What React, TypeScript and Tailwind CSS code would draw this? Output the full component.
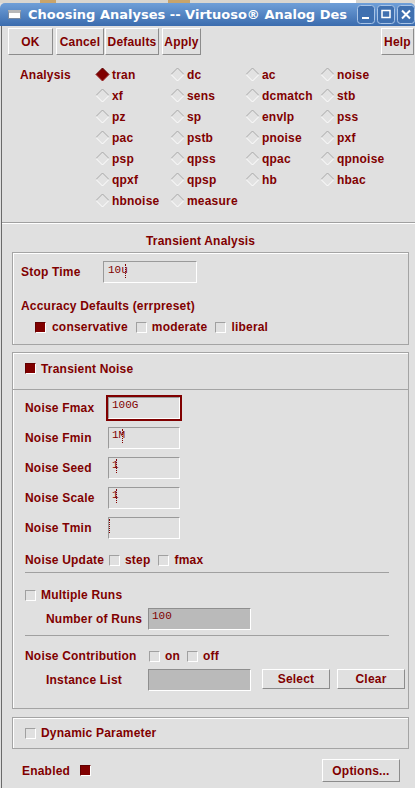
import React from "react";

const label = "text-[#800000] font-bold text-[12px] leading-[16px] tracking-[0.2px] whitespace-nowrap";
const mono = "font-['Liberation_Mono',monospace] text-[11px] leading-[13px] text-[#800000]";

const analyses = [
  "tran", "dc", "ac", "noise",
  "xf", "sens", "dcmatch", "stb",
  "pz", "sp", "envlp", "pss",
  "pac", "pstb", "pnoise", "pxf",
  "psp", "qpss", "qpac", "qpnoise",
  "qpxf", "qpsp", "hb", "hbac",
  "hbnoise", "measure",
];

function Diamond({ on }: { on?: boolean }) {
  return (
    <svg width="15" height="15" viewBox="0 0 15 15" className="shrink-0">
      <polygon points="7.5,1 14,7.5 7.5,14 1,7.5" fill={on ? "#800000" : "#e2e2e2"} />
      <polyline points="1,7.5 7.5,1 14,7.5" fill="none" stroke={on ? "#5c0000" : "#a8a8a8"} strokeWidth="1" />
      <polyline points="1,7.5 7.5,14 14,7.5" fill="none" stroke={on ? "#9a2020" : "#ffffff"} strokeWidth="1" />
    </svg>
  );
}

function Check({ on }: { on?: boolean }) {
  return (
    <span
      className={`block w-[11px] h-[11px] shrink-0 border border-b-white border-r-white ${
        on ? "bg-[#800000] border-t-[#600000] border-l-[#600000]" : "bg-[#e0e0e0] border-t-[#a0a0a0] border-l-[#a0a0a0]"
      }`}
    />
  );
}

function Cursor() {
  return <span className="inline-block align-top w-0 h-[14px] -ml-[3px] border-l border-dotted border-[#800000]" />;
}

function Field({ value, w, focus, cursor }: { value: string; w: number; focus?: boolean; cursor?: boolean }) {
  return (
    <div className={`border-2 ${focus ? "border-[#800000]" : "border-transparent"}`}>
      <div
        className={`h-[22px] border border-t-[#9a9a9a] border-l-[#9a9a9a] border-b-white border-r-white bg-[#e0e0e0] pl-[3px] pt-[1px] ${mono}`}
        style={{ width: w }}
      >
        {value}
        {cursor && <Cursor />}
      </div>
    </div>
  );
}

function Button({ children, className = "" }: { children: React.ReactNode; className?: string }) {
  return (
    <div
      className={`flex items-center justify-center bg-[#e0e0e0] border border-t-white border-l-white border-b-[#8c8c8c] border-r-[#8c8c8c] ${label} ${className}`}
    >
      {children}
    </div>
  );
}

function WinButton({ kind }: { kind: "min" | "max" | "close" }) {
  return (
    <svg width="18" height="19" viewBox="0 0 18 19" className="shrink-0 block">
      <rect x="0.5" y="0.5" width="17" height="18" rx="3" fill="#3f70b0" stroke="#a9c4e6" />
      {kind === "min" && <rect x="5" y="12" width="7" height="2" fill="#fff" />}
      {kind === "max" && <rect x="5" y="5.5" width="8" height="7" fill="none" stroke="#fff" strokeWidth="1.5" />}
      {kind === "close" && <path d="M5 5.5 L13 13.5 M13 5.5 L5 13.5" stroke="#fff" strokeWidth="2" />}
    </svg>
  );
}

export default function App() {
  return (
    <div className="w-[415px] h-[788px] overflow-hidden bg-[#e0e0e0] font-['Liberation_Sans',Arial,sans-serif] flex flex-col">
      {/* desktop strip above the window */}
      <div className="h-[3px] flex shrink-0 bg-[#d9d6d0]">
        <div className="w-[40px]" />
        <div className="w-[16px] bg-[#c9a46a]" />
        <div className="w-[112px]" />
        <div className="w-[22px] bg-[#c9a46a]" />
        <div className="w-[140px]" />
        <div className="w-[26px] bg-white" />
      </div>

      {/* title bar */}
      <div className="h-[23px] shrink-0 flex items-center rounded-t-[5px] bg-gradient-to-b from-[#6f9fd8] to-[#3b6cae] pl-[8px]">
        <div className="w-[13px] h-[9px] bg-white border border-[#7a8aa0] border-t-[3px] border-t-[#b8b8b8] shrink-0" />
        <div className="ml-[7px] flex-1 min-w-0 overflow-hidden whitespace-nowrap text-white font-bold text-[13px] leading-[16px] font-['DejaVu_Sans',sans-serif]">
          Choosing Analyses -- Virtuoso® Analog Des
        </div>
        <div className="w-[58px] shrink-0 flex gap-[2px]">
          <WinButton kind="min" />
          <WinButton kind="max" />
          <WinButton kind="close" />
        </div>
      </div>

      {/* body */}
      <div className="flex-1 flex flex-col ml-[1px] border-l border-[#6a6a6a]">
        {/* toolbar */}
        <div className="h-[32px] shrink-0 flex pt-[2px]">
          <Button className="ml-[6px] w-[45px] h-[27px]">OK</Button>
          <Button className="ml-[3px] w-[48px] h-[27px]">Cancel</Button>
          <Button className="ml-[1px] w-[54px] h-[27px]">Defaults</Button>
          <Button className="ml-[3px] w-[39px] h-[27px]">Apply</Button>
          <Button className="ml-auto mr-[1px] w-[33px] h-[27px]">Help</Button>
        </div>

        {/* analysis choices */}
        <div className="flex pl-[18px] pt-[6px]">
          <div className={`w-[75px] h-[21px] flex items-center ${label}`}>Analysis</div>
          <div className="grid grid-cols-[75px_75px_75px_75px] auto-rows-[21px]">
            {analyses.map((a, i) => (
              <div key={a} className="flex items-center gap-[2px]">
                <Diamond on={i === 0} />
                <span className={label}>{a}</span>
              </div>
            ))}
          </div>
        </div>

        <div className="mt-[11px] h-[2px] border-t border-[#a0a0a0] border-b border-b-white" />

        <div className={`h-[28px] pt-[6px] flex items-center pl-[144px] ${label}`}>Transient Analysis</div>

        {/* transient analysis box */}
        <div className="ml-[10px] mr-[6px] h-[93px] border border-[#a4a4a4] shadow-[inset_1px_1px_0_#ffffff] pl-[8px] pt-[8px]">
          <div className="flex items-center h-[22px]">
            <span className={`w-[82px] ${label}`}>Stop Time</span>
            <div
              className={`w-[94px] h-[22px] border border-t-[#9a9a9a] border-l-[#9a9a9a] border-b-white border-r-white pl-[4px] pt-[2px] ${mono}`}
            >
              10u
              <Cursor />
            </div>
          </div>
          <div className={`mt-[15px] ${label}`}>Accuracy Defaults (errpreset)</div>
          <div className="mt-[5px] h-[16px] flex items-center pl-[14px]">
            <Check on />
            <span className={`ml-[6px] ${label}`}>conservative</span>
            <span className="ml-[8px]" />
            <Check />
            <span className={`ml-[5px] ${label}`}>moderate</span>
            <span className="ml-[8px]" />
            <Check />
            <span className={`ml-[5px] ${label}`}>liberal</span>
          </div>
        </div>

        {/* transient noise box */}
        <div className="mt-[7px] ml-[10px] mr-[6px] h-[357px] border border-[#a4a4a4] shadow-[inset_1px_1px_0_#ffffff] flex flex-col">
          <div className="h-[37px] shrink-0 border-b border-[#a4a4a4] flex items-center pl-[12px] pb-[5px]">
            <Check on />
            <span className={`ml-[5px] ${label}`}>Transient Noise</span>
          </div>
          <div className="pt-[3px] pl-[12px] flex flex-col">
            {[
              ["Noise Fmax", "100G", true, false],
              ["Noise Fmin", "1M", false, true],
              ["Noise Seed", "1", false, true],
              ["Noise Scale", "1", false, true],
              ["Noise Tmin", "", false, true],
            ].map(([name, val, focus, cur]) => (
              <div key={name as string} className="h-[30px] flex items-center">
                <span className={`w-[81px] ${label}`}>{name as string}</span>
                <Field value={val as string} w={72} focus={focus as boolean} cursor={cur as boolean} />
              </div>
            ))}

            <div className="mt-[9px] h-[16px] flex items-center">
              <span className={`w-[84px] ${label}`}>Noise Update</span>
              <Check />
              <span className={`ml-[5px] ${label}`}>step</span>
              <span className="ml-[8px]" />
              <Check />
              <span className={`ml-[5px] ${label}`}>fmax</span>
            </div>

            <div className="mt-[4px] w-[364px] border-t border-[#a0a0a0]" />

            <div className="mt-[14px] h-[16px] flex items-center">
              <Check />
              <span className={`ml-[5px] ${label}`}>Multiple Runs</span>
            </div>
            <div className="mt-[5px] h-[22px] flex items-center pl-[21px]">
              <span className={`w-[102px] ${label}`}>Number of Runs</span>
              <div
                className={`w-[103px] h-[22px] bg-[#bababa] border border-t-[#8e8e8e] border-l-[#8e8e8e] border-b-white border-r-white pl-[3px] pt-[1px] ${mono}`}
              >
                100
              </div>
            </div>

            <div className="mt-[5px] w-[364px] border-t border-[#a0a0a0]" />

            <div className="mt-[12px] h-[16px] flex items-center">
              <span className={`w-[124px] ${label}`}>Noise Contribution</span>
              <Check />
              <span className={`ml-[5px] ${label}`}>on</span>
              <span className="ml-[7px]" />
              <Check />
              <span className={`ml-[5px] ${label}`}>off</span>
            </div>
            <div className="mt-[5px] h-[22px] flex items-start pl-[21px]">
              <span className={`w-[102px] h-[22px] flex items-center ${label}`}>Instance List</span>
              <div className="w-[103px] h-[22px] bg-[#bababa] border border-t-[#8e8e8e] border-l-[#8e8e8e] border-b-white border-r-white" />
              <Button className="ml-[11px] w-[68px] h-[20px]">Select</Button>
              <Button className="ml-[7px] w-[68px] h-[20px]">Clear</Button>
            </div>
          </div>
        </div>

        {/* dynamic parameter box */}
        <div className="mt-[8px] ml-[10px] mr-[6px] h-[32px] border border-[#a4a4a4] shadow-[inset_1px_1px_0_#ffffff] flex items-center pl-[12px]">
          <Check />
          <span className={`ml-[5px] ${label}`}>Dynamic Parameter</span>
        </div>

        {/* bottom row */}
        <div className="mt-[10px] h-[23px] flex items-center pl-[20px]">
          <span className={label}>Enabled</span>
          <span className="ml-[10px]">
            <Check on />
          </span>
          <Button className="ml-auto mr-[15px] w-[78px] h-[23px]">Options...</Button>
        </div>
      </div>
    </div>
  );
}
